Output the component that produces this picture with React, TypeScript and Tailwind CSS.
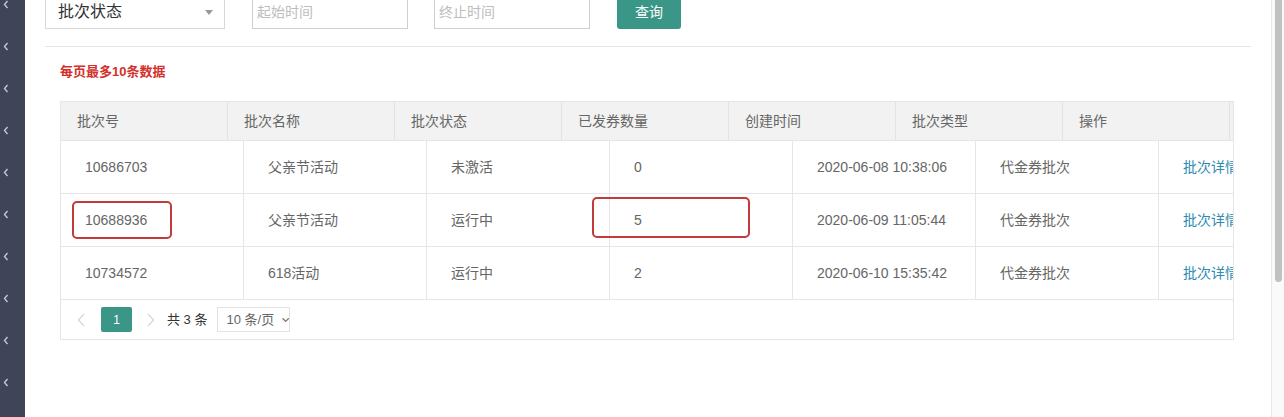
import { FaChevronDown } from "react-icons/fa";

interface Batch {
  id: string;
  name: string;
  status: string;
  issued: string;
  createdAt: string;
  type: string;
}

const headers = ["批次号", "批次名称", "批次状态", "已发券数量", "创建时间", "批次类型", "操作"];

const batches: Batch[] = [
  { id: "10686703", name: "父亲节活动", status: "未激活", issued: "0", createdAt: "2020-06-08 10:38:06", type: "代金券批次" },
  { id: "10688936", name: "父亲节活动", status: "运行中", issued: "5", createdAt: "2020-06-09 11:05:44", type: "代金券批次" },
  { id: "10734572", name: "618活动", status: "运行中", issued: "2", createdAt: "2020-06-10 15:35:42", type: "代金券批次" },
];

function SideChevron() {
  return (
    <div className="flex h-[42px] shrink-0 items-center pl-[3px]">
      <svg width="6" height="9" viewBox="0 0 6 9" fill="none">
        <path d="M4.5 1 L1.5 4.5 L4.5 8" stroke="#c9ccd6" strokeWidth="1.3" />
      </svg>
    </div>
  );
}

function PageArrow({ dir }: { dir: "left" | "right" }) {
  return (
    <svg width="8" height="14" viewBox="0 0 8 14" fill="none">
      <path
        d={dir === "left" ? "M7 1 L1.5 7 L7 13" : "M1 1 L6.5 7 L1 13"}
        stroke="#d6d6d6"
        strokeWidth="1.2"
      />
    </svg>
  );
}

export default function App() {
  return (
    <div className="flex h-[417px] w-[1284px] overflow-hidden bg-white font-['Liberation_Sans','Noto_Sans_CJK_SC',sans-serif]">
      {/* ================= Sidebar ================= */}
      <div className="flex w-[25px] shrink-0 flex-col bg-[#3f4458]">
        <div className="-mt-[17px] flex flex-col">
          {Array.from({ length: 11 }).map((_, i) => (
            <SideChevron key={i} />
          ))}
        </div>
      </div>

      {/* ================= Main ================= */}
      <div className="flex min-w-0 flex-1 flex-col px-[20px]">
        {/* Filters */}
        <div className="-mt-[5px] flex items-center">
          <div className="flex h-[34px] w-[180px] items-center justify-between border border-[#d9d9d9] pl-[12px] pr-[11px] text-[16px] text-[#333]">
            <span>批次状态</span>
            <svg width="8" height="5" viewBox="0 0 8 5">
              <path d="M0 0 H8 L4 5 Z" fill="#999" />
            </svg>
          </div>
          <div className="ml-[27px] flex h-[34px] w-[156px] items-center border border-[#cfcfcf] pl-[4px] text-[14px] text-[#bdbdbd]">
            起始时间
          </div>
          <div className="ml-[26px] flex h-[34px] w-[156px] items-center border border-[#cfcfcf] pl-[4px] text-[14px] text-[#bdbdbd]">
            终止时间
          </div>
          <button
            type="button"
            className="ml-[27px] flex h-[34px] w-[64px] items-center justify-center rounded-[3px] bg-[#3a9687] text-[14px] text-white"
          >
            查询
          </button>
        </div>

        <div className="mt-[17px] h-px w-full bg-[#e4e4e4]" />

        <p className="ml-[15px] mt-[17px] text-[13px] font-bold leading-[16px] text-[#d3302c]">
          每页最多10条数据
        </p>

        {/* ================= Table ================= */}
        <div className="relative ml-[15px] mr-[17px] mt-[21px] border border-[#e6e6e6]">
          <div className="flex h-[38px] bg-[#f2f2f2]">
            {headers.map((h) => (
              <div
                key={h}
                className="flex w-[167px] shrink-0 items-center border-r border-[#e2e2e2] pl-[16px] text-[14px] text-[#666]"
              >
                {h}
              </div>
            ))}
          </div>

          <div className="overflow-hidden">
            {batches.map((b) => (
              <div key={b.id} className="flex h-[53px] border-t border-[#e6e6e6] text-[14px] text-[#666]">
                {[b.id, b.name, b.status, b.issued, b.createdAt, b.type].map((v, i) => (
                  <div key={i} className="flex w-[183px] shrink-0 items-center border-r border-[#e6e6e6] pl-[24px]">
                    {v}
                  </div>
                ))}
                <div className="flex w-[183px] shrink-0 items-center pl-[24px] text-[#2d8cb0]">批次详情</div>
              </div>
            ))}
          </div>

          {/* Pagination */}
          <div className="flex h-[40px] items-center border-t border-[#e6e6e6] pl-[16px] text-[13px]">
            <PageArrow dir="left" />
            <div className="ml-[16px] flex h-[25px] w-[31px] items-center justify-center rounded-[2px] bg-[#3a9687] text-[12px] text-white">
              1
            </div>
            <div className="ml-[15px]">
              <PageArrow dir="right" />
            </div>
            <span className="ml-[12px] whitespace-nowrap text-[#333]">共 3 条</span>
            <div className="ml-[10px] flex h-[25px] w-[73px] items-center gap-[8px] whitespace-nowrap border border-[#e2e2e2] pl-[8px] text-[#666]">
              <span>10 条/页</span>
              <FaChevronDown className="text-[8px] text-[#777]" />
            </div>
          </div>

          {/* annotations */}
          <div className="absolute left-[11px] top-[99px] h-[38px] w-[100px] rounded-[5px] border-[2.5px] border-[#c23a3a]" />
          <div className="absolute left-[531px] top-[95px] h-[41px] w-[158px] rounded-[5px] border-[2.5px] border-[#c23a3a]" />
        </div>
      </div>

      {/* ================= Scrollbar ================= */}
      <div className="flex w-[13px] shrink-0 justify-center border-l border-[#e8e8e8] bg-[#fafafa]">
        <div className="h-[282px] w-[7px] rounded-b-full bg-[#c1c1c1]" />
      </div>
    </div>
  );
}
